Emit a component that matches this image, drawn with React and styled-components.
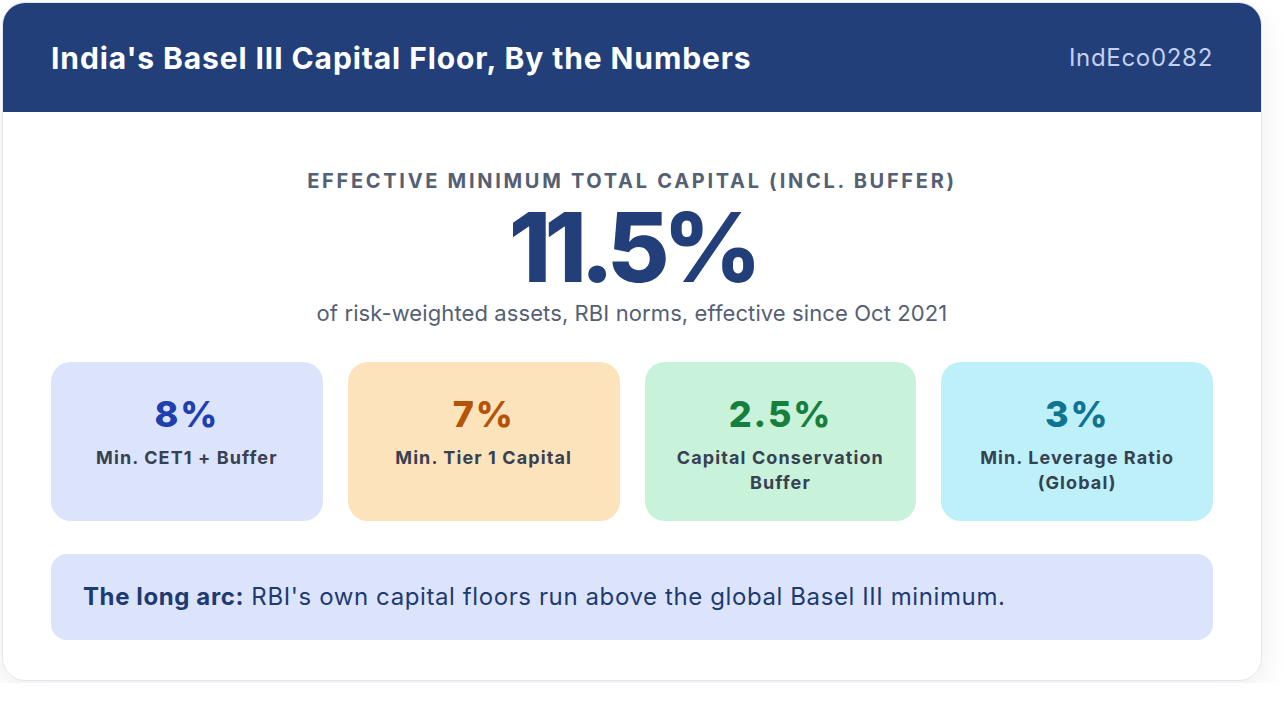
import styled, { createGlobalStyle } from "styled-components";

const GlobalStyle = createGlobalStyle`
  html, body {
    margin: 0;
    padding: 0;
    background: #ffffff;
  }
  body {
    font-family: Inter, "Noto Sans", "Liberation Sans", sans-serif;
  }
`;

const Page = styled.div`
  padding: 2px;
`;

const Card = styled.div`
  width: 1260px;
  box-sizing: border-box;
  background: #ffffff;
  border: 1px solid #e3e5ea;
  border-radius: 23px;
  overflow: hidden;
  box-shadow: 0 12px 30px rgba(15, 23, 42, 0.07);
`;

const Header = styled.header`
  height: 109px;
  background: #223f7a;
  display: flex;
  align-items: center;
  justify-content: space-between;
  padding: 0 48px;
`;

const Title = styled.h1`
  margin: 0;
  font-size: 30px;
  font-weight: 700;
  color: #ffffff;
  letter-spacing: 0.9px;
`;

const Code = styled.span`
  font-size: 24px;
  font-weight: 400;
  color: #c3d0ee;
  letter-spacing: 0.7px;
`;

const Body = styled.main`
  padding: 57px 48px 40px;
  display: flex;
  flex-direction: column;
`;

const Hero = styled.section`
  text-align: center;
`;

const Eyebrow = styled.div`
  font-size: 20px;
  font-weight: 700;
  letter-spacing: 2.7px;
  text-transform: uppercase;
  color: #556074;
  line-height: 24px;
`;

const BigValue = styled.div`
  margin-top: 4px;
  font-size: 96px;
  font-weight: 800;
  color: #223f7a;
  line-height: 100px;
  letter-spacing: -6.6px;
`;

const Caption = styled.div`
  font-size: 22px;
  color: #556074;
  line-height: 28px;
  margin-top: 2px;
  letter-spacing: 0.1px;
`;

const Stats = styled.div`
  display: grid;
  grid-template-columns: repeat(4, 1fr);
  gap: 25px;
  margin-top: 35px;
`;

const tones = {
  blue: { bg: "#dce4fb", fg: "#1e40af" },
  amber: { bg: "#fce3bb", fg: "#b45309" },
  green: { bg: "#c8f2d9", fg: "#15803d" },
  cyan: { bg: "#bdf0f9", fg: "#0e7490" },
};

const StatCard = styled.div`
  background: ${(p) => tones[p.$tone].bg};
  border-radius: 20px;
  padding: 30px 16px;
  height: 159px;
  box-sizing: border-box;
  text-align: center;
`;

const StatValue = styled.div`
  font-size: 36px;
  font-weight: 800;
  line-height: 44px;
  letter-spacing: 1.8px;
  color: ${(p) => tones[p.$tone].fg};
`;

const StatLabel = styled.div`
  font-size: 18px;
  font-weight: 700;
  line-height: 25px;
  letter-spacing: 1.1px;
  color: #374151;
  margin-top: 9px;
`;

const Callout = styled.div`
  margin-top: 33px;
  background: #dce4fb;
  border-radius: 16px;
  padding: 29px 32px;
  font-size: 24px;
  line-height: 28px;
  letter-spacing: 0.6px;
  color: #1e3a72;

  strong {
    font-weight: 700;
  }
`;

const stats = [
  { value: "8%", label: "Min. CET1 + Buffer", tone: "blue" },
  { value: "7%", label: "Min. Tier 1 Capital", tone: "amber" },
  { value: "2.5%", label: "Capital Conservation Buffer", tone: "green" },
  { value: "3%", label: "Min. Leverage Ratio (Global)", tone: "cyan" },
];

export default function App() {
  return (
    <>
      <GlobalStyle />
      <Page>
        <Card>
          <Header>
            <Title>India's Basel III Capital Floor, By the Numbers</Title>
            <Code>IndEco0282</Code>
          </Header>
          <Body>
            <Hero>
              <Eyebrow>Effective Minimum Total Capital (incl. buffer)</Eyebrow>
              <BigValue>11.5%</BigValue>
              <Caption>of risk-weighted assets, RBI norms, effective since Oct 2021</Caption>
            </Hero>
            <Stats>
              {stats.map((s) => (
                <StatCard key={s.label} $tone={s.tone}>
                  <StatValue $tone={s.tone}>{s.value}</StatValue>
                  <StatLabel>{s.label}</StatLabel>
                </StatCard>
              ))}
            </Stats>
            <Callout>
              <strong>The long arc:</strong> RBI's own capital floors run above the global Basel III minimum.
            </Callout>
          </Body>
        </Card>
      </Page>
    </>
  );
}
